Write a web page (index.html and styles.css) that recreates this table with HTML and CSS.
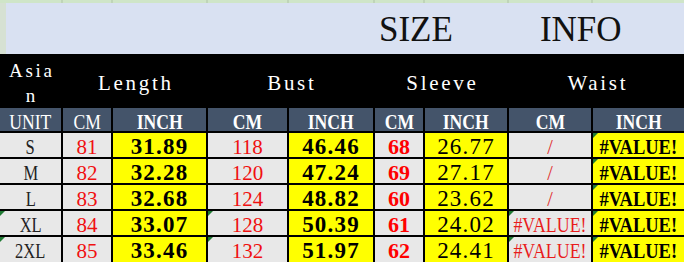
FILE: index.html
```html
<!DOCTYPE html>
<html>
<head>
<meta charset="utf-8">
<link rel="stylesheet" href="styles.css">
</head>
<body>
<div class="sheet">
  <div class="strip">
    <div></div><div></div><div></div><div></div><div></div><div></div><div></div><div></div><div></div>
  </div>
  <div class="title"><span class="t-size">SIZE</span><span class="t-info">INFO</span></div>
  <div class="grid">
    <div class="hd hd-asian"><span>Asian</span></div>
    <div class="hd span2"><span>Length</span></div>
    <div class="hd span2"><span>Bust</span></div>
    <div class="hd span2"><span>Sleeve</span></div>
    <div class="hd span2"><span>Waist</span></div>

    <div class="u"><span>UNIT</span></div>
    <div class="u"><span>CM</span></div>
    <div class="u b"><span>INCH</span></div>
    <div class="u b"><span>CM</span></div>
    <div class="u b"><span>INCH</span></div>
    <div class="u b"><span>CM</span></div>
    <div class="u b"><span>INCH</span></div>
    <div class="u b"><span>CM</span></div>
    <div class="u b"><span>INCH</span></div>

    <div class="c g sz"><span>S</span></div>
    <div class="c g rn">81</div>
    <div class="c y bn">31.89</div>
    <div class="c g rn">118</div>
    <div class="c y bn">46.46</div>
    <div class="c g rb">68</div>
    <div class="c y n">26.77</div>
    <div class="c g sl">/</div>
    <div class="c y bv e"><span>#VALUE!</span></div>

    <div class="c g sz"><span>M</span></div>
    <div class="c g rn">82</div>
    <div class="c y bn">32.28</div>
    <div class="c g rn">120</div>
    <div class="c y bn">47.24</div>
    <div class="c g rb">69</div>
    <div class="c y n">27.17</div>
    <div class="c g sl">/</div>
    <div class="c y bv e"><span>#VALUE!</span></div>

    <div class="c g sz"><span>L</span></div>
    <div class="c g rn">83</div>
    <div class="c y bn">32.68</div>
    <div class="c g rn">124</div>
    <div class="c y bn">48.82</div>
    <div class="c g rb">60</div>
    <div class="c y n">23.62</div>
    <div class="c g sl">/</div>
    <div class="c y bv e"><span>#VALUE!</span></div>

    <div class="c g sz e"><span>XL</span></div>
    <div class="c g rn">84</div>
    <div class="c y bn">33.07</div>
    <div class="c g rn e">128</div>
    <div class="c y bn">50.39</div>
    <div class="c g rb">61</div>
    <div class="c y n">24.02</div>
    <div class="c g rv e"><span>#VALUE!</span></div>
    <div class="c y bv e"><span>#VALUE!</span></div>

    <div class="c g sz e"><span>2XL</span></div>
    <div class="c g rn">85</div>
    <div class="c y bn">33.46</div>
    <div class="c g rn e">132</div>
    <div class="c y bn">51.97</div>
    <div class="c g rb">62</div>
    <div class="c y n">24.41</div>
    <div class="c g rv e"><span>#VALUE!</span></div>
    <div class="c y bv e"><span>#VALUE!</span></div>
  </div>
</div>
</body>
</html>
```

FILE: styles.css
```css
:root {
  --cols: 61px 48px 93px 79px 84px 48px 82px 82px 91px;
}

body {
  margin: 0;
  width: 684px;
  height: 262px;
  overflow: hidden;
  background: #fff;
}

.sheet {
  width: 684px;
}

.strip {
  display: grid;
  grid-template-columns: var(--cols);
  column-gap: 2px;
  height: 3px;
  background: #bfd4b8;
}

.strip div {
  background: #cfe5c8;
}

.title {
  box-sizing: border-box;
  height: 51px;
  display: flex;
  align-items: flex-start;
  padding: 7px 0 0 373px;
  border-left: 6px solid #d6e1d3;
  background: #d9e1f2;
  font: 35px/1.15 "Liberation Serif", serif;
  color: #111;
}

.t-info {
  margin-left: 87px;
}

.grid {
  display: grid;
  grid-template-columns: var(--cols);
  grid-template-rows: 52px 23px 24px 24px 24px 24px 25px;
  gap: 2px;
  background: #000;
}

.hd {
  display: flex;
  align-items: center;
  justify-content: center;
  box-sizing: border-box;
  padding-top: 6px;
  background: #000;
  color: #fff;
  font: 21px/24px "Liberation Serif", serif;
  letter-spacing: 2.7px;
}

.hd span {
  display: inline-block;
  padding-left: 2.7px;
}

.hd-asian span {
  width: 47px;
  word-break: break-all;
  text-align: center;
  font-size: 19px;
  line-height: 25px;
}

.span2 {
  grid-column: span 2;
}

.u {
  display: flex;
  justify-content: center;
  align-items: flex-start;
  box-sizing: border-box;
  padding-top: 2px;
  background: #44546a;
  color: #fff;
  font: 22px/23px "Liberation Serif", serif;
  white-space: nowrap;
}

.u span {
  display: inline-block;
  transform: scaleX(0.8);
}

.u.b {
  font-weight: bold;
}

.c {
  position: relative;
  display: flex;
  justify-content: center;
  align-items: flex-start;
  box-sizing: border-box;
  padding-top: 4px;
  white-space: nowrap;
  font-family: "Liberation Serif", serif;
  line-height: 20px;
}

.c span {
  display: inline-block;
}

.g {
  background: #e8e8e8;
}

.y {
  background: #ffff00;
}

.sz {
  font-size: 22px;
  color: #222;
}

.sz span {
  transform: scaleX(0.75);
}

.rn {
  font-size: 21px;
  color: #f01010;
}

.bn {
  font-size: 23px;
  font-weight: bold;
  letter-spacing: 1.2px;
  color: #000;
}

.n {
  font-size: 23px;
  letter-spacing: 1.2px;
  color: #000;
}

.rb {
  font-size: 22px;
  font-weight: bold;
  color: #f00;
}

.sl {
  font-size: 20px;
  color: #e03030;
}

.rv {
  font-size: 21px;
  color: #e81c1c;
}

.rv span {
  transform: scaleX(0.85);
}

.bv {
  font-size: 22px;
  font-weight: bold;
  color: #000;
}

.bv span {
  transform: scaleX(0.84);
}

.e::before {
  content: "";
  position: absolute;
  top: 0;
  left: 0;
  border-top: 5px solid #1f7a33;
  border-right: 5px solid transparent;
}
```
